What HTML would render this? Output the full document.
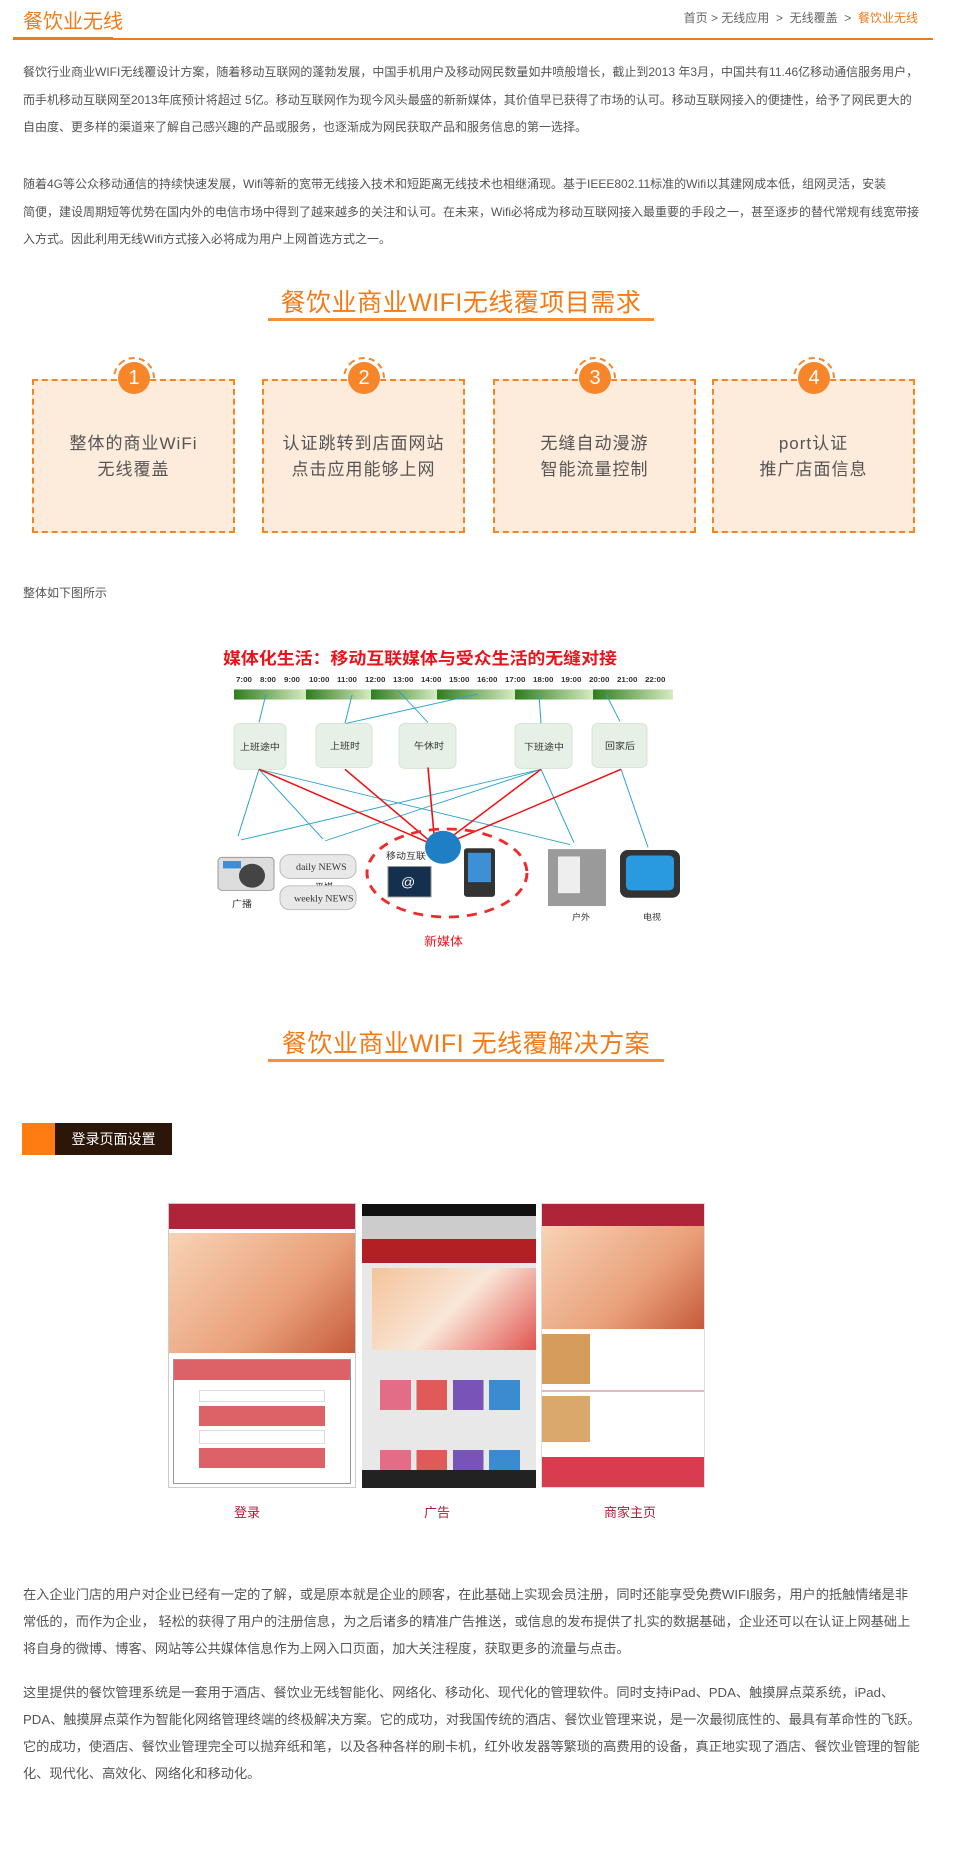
<!DOCTYPE html>
<html><head><meta charset="utf-8">
<style>
*{margin:0;padding:0;box-sizing:border-box}
body{width:966px;height:1870px;background:#fff;position:relative;overflow:hidden;font-family:"Liberation Sans","Noto Sans CJK SC",sans-serif;color:#555}
.a{position:absolute}
.p{position:absolute;left:23px;font-size:12px;white-space:nowrap;color:#555}
.q{position:absolute;left:23px;font-size:13.2px;white-space:nowrap;color:#555}
.h2{position:absolute;font-size:25px;color:#f47a16;letter-spacing:1px;white-space:nowrap;text-align:center}
.ul{position:absolute;height:3px;background:#f7902f}
.box{position:absolute;top:379px;width:203px;height:154px;border:2px dashed #f7851f;background:#fdebdc;text-align:center;font-size:17px;color:#555;line-height:26px;padding-top:50px;letter-spacing:1px}
.c{position:absolute;top:-19px;left:84px;width:32px;height:32px;border-radius:50%;background:#f7852a;color:#fff;font-size:20px;line-height:32px;text-align:center;letter-spacing:0}
.ring{position:absolute;top:-24px;left:79px;width:42px;height:42px;border-radius:50%;border:2px dashed #f7852a;border-bottom-color:transparent;border-left-color:transparent;transform:rotate(-45deg);background:transparent}
</style></head><body>
<div class="a" style="left:23px;top:5px;font-size:20px;color:#f47a16">餐饮业无线</div>
<div class="a" style="right:48px;top:9px;font-size:12px;color:#666;white-space:nowrap">首页 &gt; 无线应用 &nbsp;&gt; &nbsp;无线覆盖 &nbsp;&gt; &nbsp;<span style="color:#f47a16">餐饮业无线</span></div>
<div class="a" style="left:13px;top:38px;width:920px;height:2px;background:#f47a16"></div>
<div class="a" style="left:13px;top:37px;width:100px;height:3px;background:#f47a16"></div>

<div class="p" style="top:63px">餐饮行业商业WIFI无线覆设计方案，随着移动互联网的蓬勃发展，中国手机用户及移动网民数量如井喷般增长，截止到2013 年3月，中国共有11.46亿移动通信服务用户，</div>
<div class="p" style="top:91px">而手机移动互联网至2013年底预计将超过 5亿。移动互联网作为现今风头最盛的新新媒体，其价值早已获得了市场的认可。移动互联网接入的便捷性，给予了网民更大的</div>
<div class="p" style="top:118px">自由度、更多样的渠道来了解自己感兴趣的产品或服务，也逐渐成为网民获取产品和服务信息的第一选择。</div>
<div class="p" style="top:175px">随着4G等公众移动通信的持续快速发展，Wifi等新的宽带无线接入技术和短距离无线技术也相继涌现。基于IEEE802.11标准的Wifi以其建网成本低，组网灵活，安装</div>
<div class="p" style="top:203px">简便，建设周期短等优势在国内外的电信市场中得到了越来越多的关注和认可。在未来，Wifi必将成为移动互联网接入最重要的手段之一，甚至逐步的替代常规有线宽带接</div>
<div class="p" style="top:230px">入方式。因此利用无线Wifi方式接入必将成为用户上网首选方式之一。</div>

<div class="h2" style="left:268px;top:283px;width:386px;letter-spacing:0.5px">餐饮业商业WIFI无线覆项目需求</div>
<div class="ul" style="left:268px;top:318px;width:386px"></div>

<div class="box" style="left:32px"><div class="ring"></div><div class="c">1</div>整体的商业WiFi<br>无线覆盖</div>
<div class="box" style="left:262px"><div class="ring"></div><div class="c">2</div>认证跳转到店面网站<br>点击应用能够上网</div>
<div class="box" style="left:493px"><div class="ring"></div><div class="c">3</div>无缝自动漫游<br>智能流量控制</div>
<div class="box" style="left:712px"><div class="ring"></div><div class="c">4</div>port认证<br>推广店面信息</div>

<div class="p" style="top:584px">整体如下图所示</div>

<svg class="a" style="left:170px;top:650px" width="560" height="312" viewBox="0 0 560 340" preserveAspectRatio="none">
<defs><linearGradient id="g" x1="0" x2="1"><stop offset="0" stop-color="#2e7d1e"/><stop offset="1" stop-color="#d6ebc0"/></linearGradient></defs>
<text x="53" y="15" font-size="18" font-weight="bold" fill="#e8141b" font-family="Liberation Sans,Noto Sans CJK SC,sans-serif" textLength="394">媒体化生活：移动互联媒体与受众生活的无缝对接</text>
<g font-size="8" font-weight="bold" fill="#333" font-family="Liberation Sans,sans-serif">
<text x="66" y="35">7:00</text><text x="90" y="35">8:00</text><text x="114" y="35">9:00</text><text x="139" y="35">10:00</text><text x="167" y="35">11:00</text><text x="195" y="35">12:00</text><text x="223" y="35">13:00</text><text x="251" y="35">14:00</text><text x="279" y="35">15:00</text><text x="307" y="35">16:00</text><text x="335" y="35">17:00</text><text x="363" y="35">18:00</text><text x="391" y="35">19:00</text><text x="419" y="35">20:00</text><text x="447" y="35">21:00</text><text x="475" y="35">22:00</text></g>
<rect x="64" y="43" width="72" height="11" fill="url(#g)"/><rect x="136" y="43" width="65" height="11" fill="url(#g)"/><rect x="201" y="43" width="66" height="11" fill="url(#g)"/><rect x="267" y="43" width="78" height="11" fill="url(#g)"/><rect x="345" y="43" width="78" height="11" fill="url(#g)"/><rect x="423" y="43" width="80" height="11" fill="url(#g)"/>
<g fill="#e6f0e6" stroke="#d4e4d4"><rect x="64" y="80" width="52" height="50" rx="6"/><rect x="146" y="80" width="56" height="48" rx="6"/><rect x="229" y="80" width="57" height="49" rx="6"/><rect x="345" y="80" width="57" height="49" rx="6"/><rect x="422" y="80" width="55" height="48" rx="6"/></g>
<g font-size="10" fill="#333" font-family="Noto Sans CJK SC,sans-serif"><text x="70" y="109">上班途中</text><text x="160" y="108">上班时</text><text x="244" y="108">午休时</text><text x="354" y="109">下班途中</text><text x="435" y="108">回家后</text></g>
<g stroke="#2ba3cc" stroke-width="1" fill="none"><path d="M96 48L89 79M182 49L175 80M228 44L258 79M308 48L176 80M369 48L371 80M436 48L450 78M89 130L68 203M89 130L153 206M89 130L400 212M371 130L71 207M371 130L155 208M371 130L404 210M451 130L478 215"/></g>
<g stroke="#f01010" stroke-width="1.6" fill="none"><path d="M89 130L265 213M175 130L265 213M258 128L265 213M371 130L270 213M451 130L272 213"/></g>
<ellipse cx="277" cy="243" rx="80" ry="48" fill="none" stroke="#ee2a2a" stroke-width="3" stroke-dasharray="10 8"/>
<circle cx="273" cy="215" r="18" fill="#1e7fc4"/>
<rect x="218" y="236" width="43" height="33" fill="#15304f" stroke="#888"/><text x="231" y="258" fill="#fff" font-size="14">@</text>
<rect x="294" y="216" width="31" height="53" rx="3" fill="#333"/><rect x="298" y="221" width="23" height="32" fill="#3f8fd6"/>
<text x="216" y="228" font-size="10" fill="#333" font-family="Noto Sans CJK SC,sans-serif">移动互联</text>
<rect x="48" y="226" width="56" height="36" rx="4" fill="#ddd" stroke="#999"/><circle cx="82" cy="246" r="13" fill="#444"/><rect x="53" y="230" width="18" height="8" fill="#3b8ed5"/>
<text x="62" y="280" font-size="10" fill="#333" font-family="Noto Sans CJK SC,sans-serif">广播</text>
<rect x="110" y="223" width="76" height="26" rx="10" fill="#e8e8e8" stroke="#bbb"/><text x="126" y="240" font-size="10" fill="#333" font-family="Liberation Serif,serif">daily NEWS</text>
<text x="145" y="261" font-size="9" fill="#333" font-family="Noto Sans CJK SC,sans-serif">平媒</text>
<rect x="110" y="257" width="76" height="26" rx="10" fill="#e8e8e8" stroke="#bbb"/><text x="124" y="274" font-size="10" fill="#333" font-family="Liberation Serif,serif">weekly NEWS</text>
<rect x="378" y="217" width="58" height="62" fill="#9a9a9a"/><rect x="388" y="225" width="22" height="40" fill="#eee"/>
<text x="402" y="294" font-size="9" fill="#333" font-family="Noto Sans CJK SC,sans-serif">户外</text>
<rect x="450" y="218" width="60" height="52" rx="8" fill="#333"/><rect x="456" y="224" width="48" height="38" rx="5" fill="#2a9ae0"/>
<text x="473" y="294" font-size="9" fill="#333" font-family="Noto Sans CJK SC,sans-serif">电视</text>
<text x="254" y="322" font-size="13" fill="#e8141b" font-family="Noto Sans CJK SC,sans-serif">新媒体</text>
</svg>

<div class="h2" style="left:268px;top:1024px;width:396px;letter-spacing:0.5px">餐饮业商业WIFI 无线覆解决方案</div>
<div class="ul" style="left:268px;top:1059px;width:396px"></div>

<div class="a" style="left:22px;top:1123px;width:33px;height:32px;background:#ff7c12"></div>
<div class="a" style="left:55px;top:1123px;width:117px;height:32px;background:#2c1608;color:#fff;font-size:14px;line-height:32px;text-align:center">登录页面设置</div>

<!-- phone 1 -->
<div class="a" style="left:168px;top:1203px;width:188px;height:285px;background:#fff;border:1px solid #ccc">
 <div style="height:25px;background:#b0243a"></div>
 <div style="height:120px;margin-top:4px;background:linear-gradient(135deg,#f7d3b5,#e9a07a 60%,#c55a3a)"></div>
 <div style="margin:6px 4px 0;border:1px solid #999;height:125px">
  <div style="height:20px;background:#dc6268"></div>
  <div style="margin:10px 25px 0;height:12px;border:1px solid #ddd"></div>
  <div style="margin:4px 25px 0;height:20px;background:#dc6268"></div>
  <div style="margin:4px 25px 0;height:14px;border:1px solid #ddd"></div>
  <div style="margin:4px 25px 0;height:20px;background:#dc6268"></div>
 </div>
</div>
<!-- phone 2 -->
<div class="a" style="left:362px;top:1204px;width:174px;height:284px;background:#e8e8e8">
 <div style="height:12px;background:#111"></div>
 <div style="height:23px;background:#ccc"></div>
 <div style="height:24px;background:#b21f24"></div>
 <div style="height:82px;margin:5px 0 0 10px;background:linear-gradient(135deg,#f4c39a,#f9e7d8 50%,#e25450)"></div>
 <div style="margin:30px 0 0 18px;height:30px;width:140px;background:linear-gradient(90deg,#e36c86 0 22%,transparent 22% 26%,#e15a5a 26% 48%,transparent 48% 52%,#7853b8 52% 74%,transparent 74% 78%,#3a8bd0 78%)"></div>
 <div style="margin:40px 0 0 18px;height:30px;width:140px;background:linear-gradient(90deg,#e36c86 0 22%,transparent 22% 26%,#e15a5a 26% 48%,transparent 48% 52%,#7853b8 52% 74%,transparent 74% 78%,#3a8bd0 78%)"></div>
 <div class="a" style="left:0;bottom:0;width:174px;height:18px;background:#222"></div>
</div>
<!-- phone 3 -->
<div class="a" style="left:541px;top:1203px;width:164px;height:285px;background:#fff;border:1px solid #ddd">
 <div style="height:22px;background:#b0243a"></div>
 <div style="height:103px;background:linear-gradient(135deg,#f7d3b5,#e9a07a 60%,#c55a3a)"></div>
 <div style="margin-top:5px;height:50px;width:48px;background:#d59c5c"></div>
 <div style="margin-top:6px;border-top:2px solid #e9b6c0;height:54px"><div style="margin-top:4px;height:46px;width:48px;background:#d9a86a"></div></div>
 <div class="a" style="left:0;bottom:0;width:162px;height:30px;background:#d83c4e"></div>
</div>
<div class="a" style="left:234px;top:1502px;font-size:13px;color:#b31a3a">登录</div>
<div class="a" style="left:424px;top:1502px;font-size:13px;color:#b31a3a">广告</div>
<div class="a" style="left:604px;top:1502px;font-size:13px;color:#b31a3a">商家主页</div>

<div class="q" style="top:1584px">在入企业门店的用户对企业已经有一定的了解，或是原本就是企业的顾客，在此基础上实现会员注册，同时还能享受免费WIFI服务，用户的抵触情绪是非</div>
<div class="q" style="top:1611px">常低的，而作为企业， 轻松的获得了用户的注册信息，为之后诸多的精准广告推送，或信息的发布提供了扎实的数据基础，企业还可以在认证上网基础上</div>
<div class="q" style="top:1638px">将自身的微博、博客、网站等公共媒体信息作为上网入口页面，加大关注程度，获取更多的流量与点击。</div>
<div class="q" style="top:1682px">这里提供的餐饮管理系统是一套用于酒店、餐饮业无线智能化、网络化、移动化、现代化的管理软件。同时支持iPad、PDA、触摸屏点菜系统，iPad、</div>
<div class="q" style="top:1709px">PDA、触摸屏点菜作为智能化网络管理终端的终极解决方案。它的成功，对我国传统的酒店、餐饮业管理来说，是一次最彻底性的、最具有革命性的飞跃。</div>
<div class="q" style="top:1736px">它的成功，使酒店、餐饮业管理完全可以抛弃纸和笔，以及各种各样的刷卡机，红外收发器等繁琐的高费用的设备，真正地实现了酒店、餐饮业管理的智能</div>
<div class="q" style="top:1763px">化、现代化、高效化、网络化和移动化。</div>
</body></html>
